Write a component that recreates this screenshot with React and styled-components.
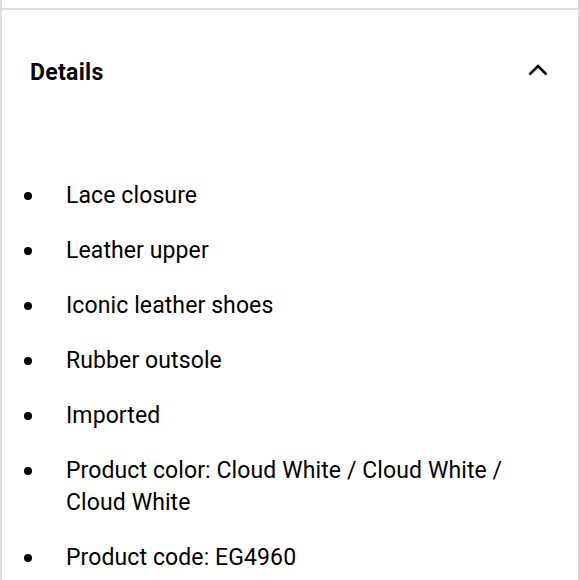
import React from "react";
import styled, { createGlobalStyle } from "styled-components";

const GlobalStyle = createGlobalStyle`
  body {
    margin: 0;
    background: #fff;
    font-family: Roboto, "Liberation Sans", sans-serif;
    color: #000;
  }
`;

const Page = styled.div`
  min-height: 100vh;
  box-sizing: border-box;
  border-left: 2px solid #dcdcdc;
  border-right: 2px solid #dcdcdc;
  padding-top: 8px;
  width: 580px;
`;

const Section = styled.section`
  border-top: 2px solid #dcdcdc;
`;

const Header = styled.div`
  display: flex;
  justify-content: space-between;
  align-items: center;
  height: 124px;
  padding: 0 30px 0 28px;
`;

const Title = styled.h2`
  margin: 0;
  font-size: 23px;
  font-weight: 700;
  letter-spacing: 0.3px;
`;

const Toggle = styled.button`
  border: 0;
  background: none;
  padding: 0;
  margin-bottom: 5px;
  display: flex;
  cursor: pointer;
`;

const List = styled.ul`
  list-style: none;
  margin: 0;
  padding: 46px 40px 0 22px;
  display: flex;
  flex-direction: column;
  gap: 23px;
`;

const Item = styled.li`
  display: flex;
  align-items: flex-start;
  font-size: 23px;
  line-height: 32px;
  letter-spacing: 0.1px;
`;

const Dot = styled.span`
  flex: none;
  width: 8px;
  height: 8px;
  border-radius: 50%;
  background: #000;
  margin-top: 12px;
  margin-right: 34px;
`;

const items = [
  "Lace closure",
  "Leather upper",
  "Iconic leather shoes",
  "Rubber outsole",
  "Imported",
  "Product color: Cloud White / Cloud White / Cloud White",
  "Product code: EG4960",
];

const App = () => {
  return (
    <Page>
      <GlobalStyle />
      <Section>
        <Header>
          <Title>Details</Title>
          <Toggle aria-label="Collapse">
            <svg width="20" height="12" viewBox="0 0 20 12">
              <path d="M1.5 10.5 L10 2 L18.5 10.5" fill="none" stroke="#000" strokeWidth="2.6" />
            </svg>
          </Toggle>
        </Header>
        <List>
          {items.map((text, i) => (
            <Item key={i}>
              <Dot />
              <span>{text}</span>
            </Item>
          ))}
        </List>
      </Section>
    </Page>
  );
};

export default App;
